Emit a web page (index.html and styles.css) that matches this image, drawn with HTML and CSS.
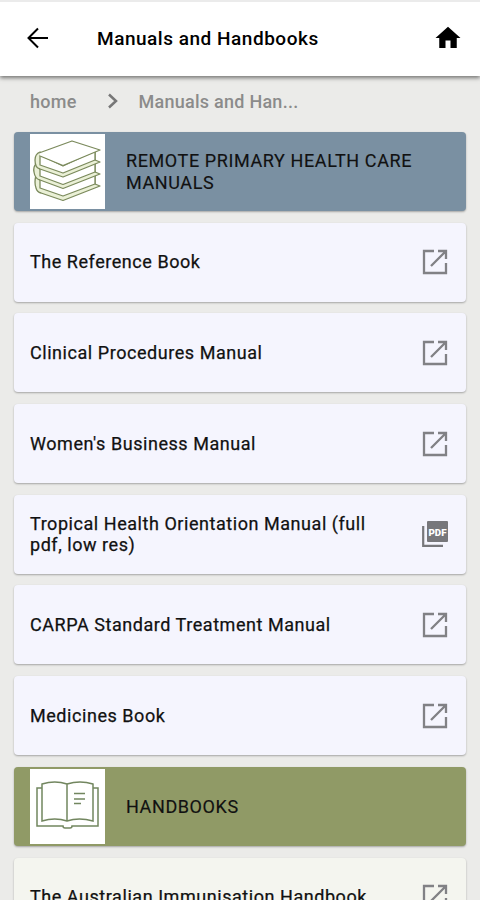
FILE: index.html
```html
<!DOCTYPE html>
<html lang="en">

<head>
    <meta charset="UTF-8">
    <meta name="viewport" content="width=device-width, initial-scale=1.0">
    <title>Manuals and Handbooks</title>
    <link rel="stylesheet" href="styles.css">
</head>

<body>
    <!-- Shared icons -->
    <svg class="icon-defs">
        <symbol id="icon-open" viewBox="0 0 26 26">
            <path d="M12 2H2v22h22V14M16 2h8v8M23.500 2.500L9 17" fill="none" stroke="currentColor" stroke-width="2.300" />
        </symbol>
    </svg>

    <!-- Top bar -->
    <header class="toolbar">
        <svg class="back-icon" viewBox="0 0 24 24">
            <path d="M22 12H3M12 2.500L2.500 12l9.500 9.500" />
        </svg>
        <h1>Manuals and Handbooks</h1>
        <svg class="home-icon" viewBox="0 0 24 24">
            <path d="M10 20v-6h4v6h5v-8h3L12 3 2 12h3v8z" />
        </svg>
    </header>

    <!-- Breadcrumbs -->
    <nav class="breadcrumbs">
        <span class="crumb">home</span>
        <svg class="chevron" viewBox="0 0 12 16">
            <path d="M2 1.500L9 8l-7 6.500" />
        </svg>
        <span class="crumb">Manuals and Han...</span>
    </nav>

    <main class="list">
        <!-- Remote primary health care manuals -->
        <div class="card section-blue">
            <svg class="section-image" viewBox="0 0 75 75">
                <g fill="#eaf0d6" stroke="#7b8a5c" stroke-width="1.300" stroke-linejoin="round">
                    <!-- bottom book -->
                    <path d="M6 41Q4 49 6 54q1 4 5 5l22 7.500L70 52l-5-2V40L33 53z" />
                    <path d="M10 45v9l23 8 32-12V38L33 51z" fill="#fff" />
                    <!-- middle book -->
                    <path d="M6 30Q3 33 4 38q1 7 6 8l23 8.500L70 40l-5-2V28L33 41z" />
                    <path d="M10 34v8l23 8.500L65 38V26L33 40z" fill="#fff" />
                    <!-- top book -->
                    <path d="M10 18Q5 20 5 26q0 8 5 9l23 8 37-15-5-2V17L33 32z" />
                    <path d="M10 21v10l23 8 32-13V17L33 32z" fill="#fff" />
                    <path d="M9 19L42 7l28 9-37 15.500L10 22" fill="#fff" />
                </g>
            </svg>
            <h2>REMOTE PRIMARY HEALTH CARE MANUALS</h2>
        </div>
        <div class="card">
            <span class="label">The Reference Book</span>
            <svg class="icon"><use href="#icon-open" /></svg>
        </div>
        <div class="card">
            <span class="label">Clinical Procedures Manual</span>
            <svg class="icon"><use href="#icon-open" /></svg>
        </div>
        <div class="card">
            <span class="label">Women's Business Manual</span>
            <svg class="icon"><use href="#icon-open" /></svg>
        </div>
        <div class="card">
            <span class="label">Tropical Health Orientation Manual (full pdf, low res)</span>
            <svg class="icon pdf-icon" viewBox="0 0 26 26">
                <rect x="5" y="0" width="21" height="21" rx="1" fill="#77777b" />
                <path d="M1.200 5v19.800H21" fill="none" stroke="#77777b" stroke-width="2.200" />
                <text x="15.500" y="14.500" textLength="18" lengthAdjust="spacingAndGlyphs">PDF</text>
            </svg>
        </div>
        <div class="card">
            <span class="label">CARPA Standard Treatment Manual</span>
            <svg class="icon"><use href="#icon-open" /></svg>
        </div>
        <div class="card">
            <span class="label">Medicines Book</span>
            <svg class="icon"><use href="#icon-open" /></svg>
        </div>

        <!-- Handbooks -->
        <div class="card section-green">
            <svg class="section-image" viewBox="0 0 75 75">
                <g fill="none" stroke="#72865f" stroke-width="1.500">
                    <path d="M12 19H7v38h26q0 2 2 2h5q2 0 2-2h26V19h-5" />
                    <path d="M12 52V15q13-4 25 0 13-4 26 0v37q-14-4-26 0-12-4-25 0zM37 15v37" />
                    <path d="M44 24.500h11M44 30h11M44 34.500h7" />
                </g>
            </svg>
            <h2>HANDBOOKS</h2>
        </div>
        <div class="card card-green">
            <span class="label">The Australian Immunisation Handbook</span>
            <svg class="icon"><use href="#icon-open" /></svg>
        </div>
    </main>
</body>

</html>
```

FILE: styles.css
```css
* {
    box-sizing: border-box;
}

body {
    margin: 0;
    height: 900px;
    overflow: hidden;
    background-color: #ebebe9;
    font-family: Roboto, "Liberation Sans", sans-serif;
    color: #111;
}

.icon-defs {
    display: none;
}

/* Top bar */
.toolbar {
    display: flex;
    align-items: center;
    height: 76px;
    padding: 0 17px 2px 26px;
    border-top: 2px solid #ebebeb;
    background-color: white;
    box-shadow: 0 2px 4px rgba(0, 0, 0, 0.5);
}

.toolbar h1 {
    flex: 1;
    margin: 0 0 0 47px;
    font-size: 19px;
    font-weight: 500;
    letter-spacing: 0.520px;
    color: black;
}

.back-icon {
    width: 24px;
    height: 24px;
    fill: none;
    stroke: black;
    stroke-width: 2;
}

.home-icon {
    width: 30px;
    height: 30px;
}

/* Breadcrumbs */
.breadcrumbs {
    display: flex;
    align-items: center;
    height: 50px;
    padding: 0 30px;
    font-size: 18px;
    font-weight: 500;
    letter-spacing: 0.250px;
    color: #8b8b8b;
}

.chevron {
    width: 12px;
    height: 16px;
    margin: 0 20px 0 30px;
    fill: none;
    stroke: #777;
    stroke-width: 2.500;
}

/* Cards */
.list {
    display: flex;
    flex-direction: column;
    gap: 11.700px;
    padding: 6px 14px 0;
}

.card {
    display: flex;
    flex: none;
    align-items: center;
    justify-content: space-between;
    height: 79px;
    padding: 0 18px 0 16px;
    border-radius: 4px;
    background-color: #f5f5fe;
    box-shadow: 0 1px 2px rgba(0, 0, 0, 0.3);
}

.label {
    width: 350px;
    font-size: 18px;
    line-height: 21.500px;
    letter-spacing: 0.550px;
    -webkit-text-stroke: 0.250px #111;
}

.icon {
    width: 26px;
    height: 26px;
    color: #818185;
}

.pdf-icon text {
    font-size: 9.500px;
    font-weight: 900;
    text-anchor: middle;
    fill: white;
}

.card h2 {
    flex: 1;
    margin: 0 0 0 21px;
    font-size: 18px;
    font-weight: 400;
    line-height: 21.500px;
    letter-spacing: 0.600px;
    -webkit-text-stroke: 0.150px #111;
}

.section-image {
    width: 75px;
    height: 75px;
    background-color: white;
}

.section-blue {
    background-color: #7a90a2;
}

.section-green {
    background-color: #909a66;
}

.card-green {
    background-color: #f4f5ef;
}
```
